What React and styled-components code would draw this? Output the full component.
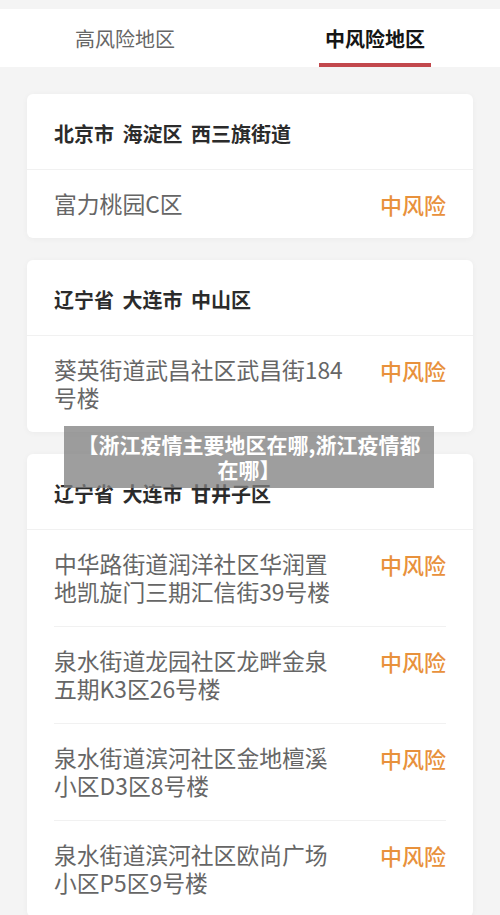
import React from 'react';
import styled, { createGlobalStyle } from 'styled-components';

const GlobalStyle = createGlobalStyle`
  html, body {
    margin: 0;
    padding: 0;
    background: #f4f4f4;
    overflow: hidden;
  }
  body {
    font-family: "Noto Sans CJK SC", "Noto Sans", sans-serif;
  }
`;

const Page = styled.div`
  position: relative;
  width: 500px;
  height: 915px;
  overflow: hidden;
  background: #f4f4f4;
  padding-top: 9px;
  box-sizing: border-box;
`;

const TabBar = styled.div`
  display: flex;
  height: 58px;
  background: #fff;
`;

const Tab = styled.div`
  flex: 1;
  display: flex;
  justify-content: center;
`;

const TabLabel = styled.div`
  position: relative;
  height: 100%;
  display: flex;
  align-items: center;
  font-size: 20px;
  font-weight: ${({ active }) => (active ? 600 : 400)};
  color: ${({ active }) => (active ? '#151515' : '#666')};
  padding: 0 6px;

  &::after {
    content: '';
    display: ${({ active }) => (active ? 'block' : 'none')};
    position: absolute;
    left: 0;
    right: 0;
    bottom: 0;
    height: 4px;
    background: #c2484c;
  }
`;

const List = styled.div`
  display: flex;
  flex-direction: column;
  gap: 22px;
  padding: 27px 27px 0;
`;

const Card = styled.div`
  background: #fff;
  border-radius: 6px;
  box-shadow: 0 1px 6px rgba(0, 0, 0, 0.04);
`;

const CardHeader = styled.div`
  padding: 28px 27px 23px;
  font-size: 20px;
  line-height: 24px;
  font-weight: 700;
  color: #2b2b2b;
  word-spacing: 4px;
  border-bottom: 1px solid #f1f1f1;
`;

const Row = styled.div`
  display: flex;
  align-items: flex-start;
  justify-content: space-between;
  margin: 0 27px;
  padding: 20px 0;
  border-top: ${({ first }) => (first ? 'none' : '1px solid #f1f1f1')};
`;

const Place = styled.div`
  width: 290px;
  font-size: 22.8px;
  line-height: 28px;
  color: #666;
`;

const Level = styled.div`
  font-size: 22px;
  line-height: 28px;
  font-weight: 500;
  color: #e8913c;
  white-space: nowrap;
`;

const Caption = styled.div`
  position: absolute;
  left: 64px;
  top: 426px;
  width: 370px;
  box-sizing: border-box;
  padding: 6px 12px;
  background: rgba(128, 128, 128, 0.76);
  color: #fff;
  font-size: 21px;
  line-height: 25px;
  font-weight: 700;
  text-align: center;
`;

const areas = [
  { title: '北京市 海淀区 西三旗街道', places: ['富力桃园C区'] },
  { title: '辽宁省 大连市 中山区', places: ['葵英街道武昌社区武昌街184号楼'] },
  {
    title: '辽宁省 大连市 甘井子区',
    places: [
      '中华路街道润洋社区华润置地凯旋门三期汇信街39号楼',
      '泉水街道龙园社区龙畔金泉五期K3区26号楼',
      '泉水街道滨河社区金地檀溪小区D3区8号楼',
      '泉水街道滨河社区欧尚广场小区P5区9号楼',
    ],
  },
];

export default function App() {
  return (
    <>
      <GlobalStyle />
      <Page>
        <TabBar>
          <Tab>
            <TabLabel>高风险地区</TabLabel>
          </Tab>
          <Tab>
            <TabLabel active>中风险地区</TabLabel>
          </Tab>
        </TabBar>
        <List>
          {areas.map((area) => (
            <Card key={area.title}>
              <CardHeader>{area.title}</CardHeader>
              {area.places.map((p, i) => (
                <Row key={p} first={i === 0}>
                  <Place>{p}</Place>
                  <Level>中风险</Level>
                </Row>
              ))}
            </Card>
          ))}
        </List>
        <Caption>【浙江疫情主要地区在哪,浙江疫情都在哪】</Caption>
      </Page>
    </>
  );
}
